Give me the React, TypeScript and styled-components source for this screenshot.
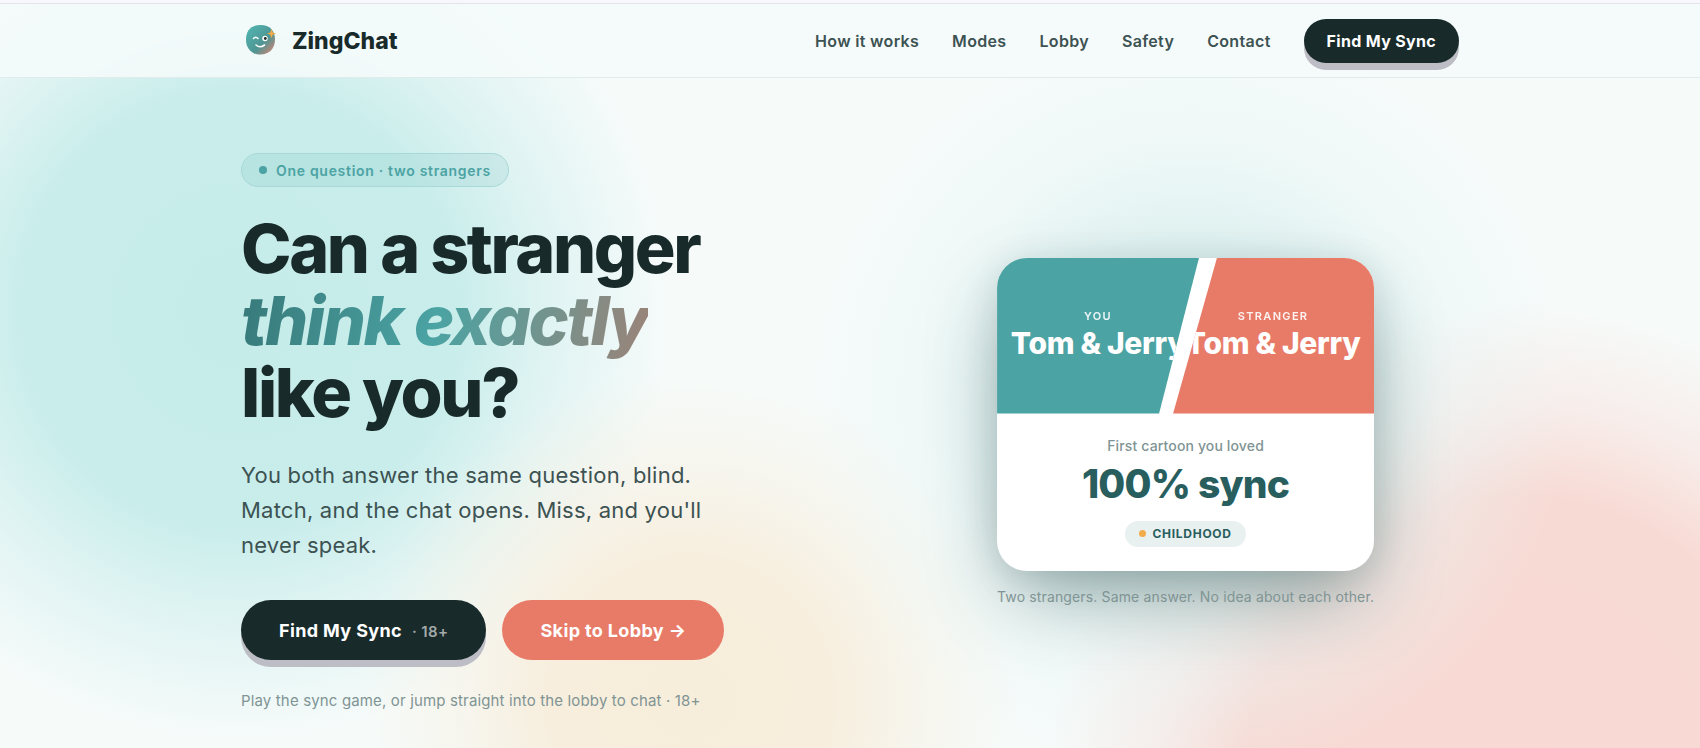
import React from 'react';
import styled, { createGlobalStyle } from 'styled-components';

const ink = '#182a2a';
const teal = '#4ba3a3';
const coral = '#e87b68';
const display = '"Inter", "Liberation Sans", sans-serif';

const GlobalStyle = createGlobalStyle`
  *, *::before, *::after { box-sizing: border-box; }
  body {
    margin: 0;
    background: #f6fbfa;
    color: ${ink};
    font-family: "Inter", "Liberation Sans", sans-serif;
    -webkit-font-smoothing: antialiased;
  }
  a { color: inherit; text-decoration: none; }
  h1, p { margin: 0; }
`;

const Page = styled.div`
  min-height: 100vh;
  overflow: hidden;
  background:
    radial-gradient(circle 380px at 1190px 400px, #d6efee 0%, #daf0efcc 40%, #e6f5f566 70%, #f6fbfa00 100%),
    radial-gradient(circle 330px at 690px 700px, #f7eddb 0%, #f7eedd 42%, #f7f0e299 66%, #f6fbfa00 100%),
    radial-gradient(circle 470px at 1520px 770px, #f8d9d3 0%, #f8dad4 58%, #f8e3df99 77%, #f6fbfa00 100%),
    radial-gradient(circle 430px at 240px 310px, #c6ecea 0%, #c8edeb 50%, #d4f0efaa 72%, #f6fbfa00 100%),
    #f6fbfa;
`;

const TopStrip = styled.div`
  height: 4px;
  background: #f9f7fe;
  border-bottom: 1px solid #e2e4ea;
`;

const Header = styled.header`
  background: rgba(245, 251, 251, 0.88);
  border-bottom: 1px solid #e0ecec;
`;

const Container = styled.div`
  width: calc(100% - 64px);
  max-width: 1218px;
  margin: 0 auto;
`;

const HeaderRow = styled(Container)`
  display: flex;
  align-items: center;
  justify-content: space-between;
  height: 73px;
`;

const Brand = styled.a`
  display: flex;
  align-items: center;
  gap: 12px;
  font-family: ${display};
  font-size: 23px;
  font-weight: 800;
`;

const Nav = styled.nav`
  display: flex;
  align-items: center;
  gap: 33px;
  font-size: 16px;
  font-weight: 600;
  letter-spacing: 0.02em;
  color: #3d5252;
`;

const DarkButton = styled.button<{ $large?: boolean }>`
  height: ${p => (p.$large ? 60 : 44)}px;
  padding: 0 ${p => (p.$large ? 38 : 23)}px;
  border: 0;
  border-radius: 32px;
  background: ${ink};
  color: #fff;
  font: 700 ${p => (p.$large ? 18 : 16)}px "Inter", sans-serif;
  letter-spacing: 0.02em;
  box-shadow: 0 7px 0 #bdbdc5;
  white-space: nowrap;
`;

const AgeTag = styled.span`
  margin-left: 10px;
  font-size: 15px;
  font-weight: 600;
  color: #a3aaaa;
`;

const CoralButton = styled.button`
  height: 60px;
  padding: 0 38px;
  border: 0;
  border-radius: 32px;
  background: ${coral};
  color: #fff;
  font: 700 18px "Inter", sans-serif;
  letter-spacing: 0.02em;
  white-space: nowrap;
`;

const Hero = styled(Container)`
  display: grid;
  grid-template-columns: 9fr 8fr;
  gap: 56px;
  align-items: center;
  padding: 75px 0 36px;
`;

const Copy = styled.div`
  display: flex;
  flex-direction: column;
  align-items: flex-start;
`;

const Eyebrow = styled.div`
  display: flex;
  align-items: center;
  gap: 9px;
  height: 34px;
  padding: 0 17px;
  border: 1px solid #a9d9d7;
  border-radius: 17px;
  background: rgba(75, 163, 163, 0.12);
  color: ${teal};
  font-size: 14px;
  font-weight: 600;
  letter-spacing: 0.05em;
`;

const Dot = styled.span<{ $color: string; $size: number }>`
  width: ${p => p.$size}px;
  height: ${p => p.$size}px;
  border-radius: 50%;
  background: ${p => p.$color};
`;

const Title = styled.h1`
  margin-top: 25px;
  font-family: ${display};
  font-size: 68px;
  line-height: 72px;
  font-weight: 800;
  letter-spacing: -0.035em;
`;

const Accent = styled.em`
  background: linear-gradient(100deg, #38797a 0%, ${teal} 48%, #9b8378 100%);
  -webkit-background-clip: text;
  background-clip: text;
  color: transparent;
`;

const Lead = styled.p`
  max-width: 480px;
  margin-top: 30px;
  font-size: 22px;
  line-height: 35px;
  letter-spacing: 0.01em;
  color: #3d5252;
`;

const Actions = styled.div`
  display: flex;
  gap: 16px;
  margin-top: 37px;
`;

const Note = styled.p`
  margin-top: 30px;
  font-size: 15px;
  line-height: 22px;
  letter-spacing: 0.01em;
  color: #7f9494;
`;

const Demo = styled.div`
  display: flex;
  flex-direction: column;
  align-items: center;
`;

const Card = styled.article`
  width: 377px;
  border-radius: 30px;
  overflow: hidden;
  background: #fff;
  box-shadow: 0 34px 80px -12px rgba(24, 60, 60, 0.4), 0 6px 36px rgba(24, 60, 60, 0.12);
`;

const Split = styled.div`
  display: grid;
  grid-template-columns: 1fr 1fr;
  height: 156px;
`;

const Half = styled.div<{ $right?: boolean }>`
  grid-row: 1;
  grid-column: 1 / -1;
  display: flex;
  flex-direction: column;
  align-items: center;
  justify-content: center;
  gap: 2px;
  padding: ${p => (p.$right ? '0 0 4px 175px' : '0 175px 4px 0')};
  background: ${p => (p.$right ? coral : teal)};
  clip-path: ${p =>
    p.$right
      ? 'polygon(220px 0, 100% 0, 100% 100%, 176px 100%)'
      : 'polygon(0 0, 202px 0, 162px 100%, 0 100%)'};
  color: #fff;
`;

const Who = styled.span`
  font-size: 11px;
  line-height: 16px;
  font-weight: 600;
  letter-spacing: 0.12em;
  opacity: 0.9;
`;

const Answer = styled.strong`
  font-family: ${display};
  font-size: 30px;
  line-height: 34px;
  font-weight: 800;
  letter-spacing: -0.01em;
  white-space: nowrap;
`;

const Result = styled.div`
  display: flex;
  flex-direction: column;
  align-items: center;
  padding: 22px 24px 24px;
`;

const Prompt = styled.p`
  font-size: 14px;
  line-height: 20px;
  font-weight: 500;
  letter-spacing: 0.01em;
  color: #7f9494;
`;

const Score = styled.p`
  margin-top: 6px;
  font-family: ${display};
  font-size: 39px;
  line-height: 44px;
  font-weight: 800;
  letter-spacing: -0.02em;
  color: #285e5e;
`;

const Category = styled.div`
  display: flex;
  align-items: center;
  gap: 6px;
  height: 26px;
  margin-top: 15px;
  padding: 0 14px;
  border-radius: 13px;
  background: #e9f0f0;
  color: #285e5e;
  font-size: 12px;
  font-weight: 700;
  letter-spacing: 0.06em;
`;

const Caption = styled.p`
  margin-top: 15px;
  font-size: 14px;
  line-height: 22px;
  letter-spacing: 0.01em;
  color: #7f9494;
`;

function Logo() {
  return (
    <svg width="39" height="39" viewBox="0 0 39 39" aria-hidden="true">
      <defs>
        <linearGradient id="face" x1="0" y1="0" x2="1" y2="1">
          <stop offset="0.15" stopColor="#4fb0ac" />
          <stop offset="0.6" stopColor="#4f9593" />
          <stop offset="1" stopColor="#e8806d" />
        </linearGradient>
      </defs>
      <path d="M19.500 4C29 4 34 10 34 18.500S28.500 33.500 19.500 33.500 5 27.500 5 18.500 10 4 19.500 4z" fill="url(#face)" />
      <path d="M12.500 17.500q2.200-2.600 4.500 0" fill="none" stroke="#fff" strokeWidth="1.500" strokeLinecap="round" />
      <circle cx="24" cy="17.500" r="2.700" fill="#fff" />
      <circle cx="24.300" cy="17.500" r="1.400" fill={ink} />
      <path d="M15 24q4 3.500 8.500 0" fill="none" stroke="#fff" strokeWidth="1.600" strokeLinecap="round" />
      <path d="M30.500 8l1.300 3.400 3.200 1.200-3.200 1.200-1.300 3.400-1.300-3.400-3.200-1.200 3.200-1.200z" fill="#f2ab4a" />
    </svg>
  );
}

const links = ['How it works', 'Modes', 'Lobby', 'Safety', 'Contact'];

export default function App() {
  return (
    <Page>
      <GlobalStyle />
      <TopStrip />
      <Header>
        <HeaderRow>
          <Brand href="#">
            <Logo />
            ZingChat
          </Brand>
          <Nav>
            {links.map(label => (
              <a key={label} href="#">{label}</a>
            ))}
            <DarkButton>Find My Sync</DarkButton>
          </Nav>
        </HeaderRow>
      </Header>
      <Hero as="main">
        <Copy>
          <Eyebrow>
            <Dot $color={teal} $size={8} />
            One question · two strangers
          </Eyebrow>
          <Title>
            Can a stranger<br />
            <Accent>think exactly</Accent><br />
            like you?
          </Title>
          <Lead>You both answer the same question, blind. Match, and the chat opens. Miss, and you'll never speak.</Lead>
          <Actions>
            <DarkButton $large>
              Find My Sync<AgeTag>· 18+</AgeTag>
            </DarkButton>
            <CoralButton>Skip to Lobby →</CoralButton>
          </Actions>
          <Note>Play the sync game, or jump straight into the lobby to chat · 18+</Note>
        </Copy>
        <Demo>
          <Card>
            <Split>
              <Half>
                <Who>YOU</Who>
                <Answer>Tom &amp; Jerry</Answer>
              </Half>
              <Half $right>
                <Who>STRANGER</Who>
                <Answer>Tom &amp; Jerry</Answer>
              </Half>
            </Split>
            <Result>
              <Prompt>First cartoon you loved</Prompt>
              <Score>100% sync</Score>
              <Category>
                <Dot $color="#f2ab4a" $size={7} />
                CHILDHOOD
              </Category>
            </Result>
          </Card>
          <Caption>Two strangers. Same answer. No idea about each other.</Caption>
        </Demo>
      </Hero>
    </Page>
  );
}
